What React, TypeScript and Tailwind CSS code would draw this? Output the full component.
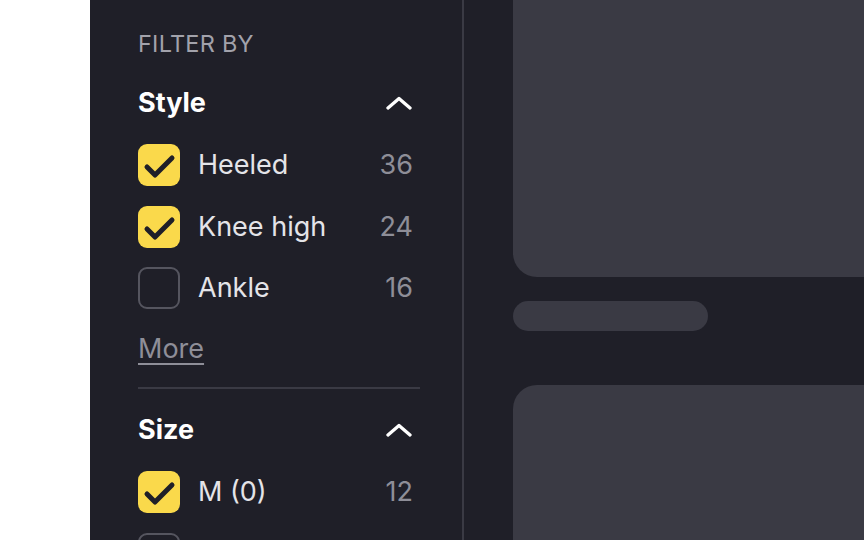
import React from 'react'

interface Option {
  label: string
  count?: number
  checked: boolean
}

interface Group {
  title: string
  options: Option[]
  more?: boolean
}

const groups: Group[] = [
  {
    title: 'Style',
    more: true,
    options: [
      { label: 'Heeled', count: 36, checked: true },
      { label: 'Knee high', count: 24, checked: true },
      { label: 'Ankle', count: 16, checked: false },
    ],
  },
  {
    title: 'Size',
    options: [
      { label: 'M (0)', count: 12, checked: true },
      // next row is cut off by the viewport, only its box peeks in
      { label: '', checked: false },
    ],
  },
]

function ChevronUp() {
  return (
    <svg width="26" height="14" viewBox="0 0 26 14" fill="none" className="mr-[8px]">
      <path d="M2 12L13 2.5L24 12" stroke="#ffffff" strokeWidth="3.3" strokeLinecap="round" strokeLinejoin="round" />
    </svg>
  )
}

function Checkbox({ checked }: { checked: boolean }) {
  if (!checked) {
    return <div className="w-[42px] h-[42px] shrink-0 rounded-[9px] border-2 border-[#55555f]" />
  }
  return (
    <div className="w-[42px] h-[42px] shrink-0 rounded-[9px] bg-[#fad94b] flex items-center justify-center">
      <svg width="42" height="42" viewBox="0 0 42 42" fill="none">
        <path d="M9 23L17 31L34 14" stroke="#1f1f28" strokeWidth="5" strokeLinecap="round" strokeLinejoin="round" />
      </svg>
    </div>
  )
}

function FilterGroup({ group }: { group: Group }) {
  return (
    <div className="flex flex-col">
      {/* Heading */}
      <div className="flex items-center justify-between h-[32px]">
        <span className="text-[27px] leading-[32px] font-bold text-white">{group.title}</span>
        <ChevronUp />
      </div>

      {/* Options */}
      <div className="flex flex-col gap-[19.5px] mt-[25px]">
        {group.options.map((opt, i) => (
          <div key={i} className="flex items-center h-[42px]">
            <Checkbox checked={opt.checked} />
            {opt.label && (
              <span className="ml-[18px] flex-1 text-[27px] leading-[32px] text-[#e4e4e8]">{opt.label}</span>
            )}
            {opt.count !== undefined && (
              <span className="text-[27px] leading-[32px] text-[#8e8e98] mr-[7px]">{opt.count}</span>
            )}
          </div>
        ))}
      </div>

      {group.more && (
        <>
          <a className="mt-[25px] self-start text-[27px] leading-[30px] text-[#8e8e98] underline decoration-2 underline-offset-[5px]">
            More
          </a>
          <div className="mt-[23px] h-[2px] bg-[#3a3a44]" />
        </>
      )}
    </div>
  )
}

export default function App() {
  return (
    <div
      className="flex w-[864px] h-[540px] overflow-hidden bg-white"
      style={{ fontFamily: 'Inter, "Noto Sans", sans-serif' }}
    >
      <div className="w-[90px] shrink-0 bg-white" />

      {/* Sidebar */}
      <aside className="w-[374px] shrink-0 h-full bg-[#1f1f28] border-r-2 border-[#3a3a44] pl-[48px] pr-[42px] pt-[30px]">
        <p className="text-[23.5px] leading-[28px] text-[#a2a2ab] tracking-[0.01em]">FILTER BY</p>
        <div className="flex flex-col gap-[25px] mt-[29px]">
          {groups.map((g) => (
            <FilterGroup key={g.title} group={g} />
          ))}
        </div>
      </aside>

      {/* Results */}
      <main className="flex-1 h-full bg-[#1f1f28] pl-[49px] flex flex-col">
        <div className="-mt-[60px] h-[337px] shrink-0 rounded-[24px] rounded-r-none bg-[#3a3a44]" />
        <div className="mt-[24px] w-[195px] h-[30px] shrink-0 rounded-full bg-[#3a3a44]" />
        <div className="mt-[54px] h-[300px] shrink-0 rounded-[24px] rounded-r-none bg-[#3a3a44]" />
      </main>
    </div>
  )
}
